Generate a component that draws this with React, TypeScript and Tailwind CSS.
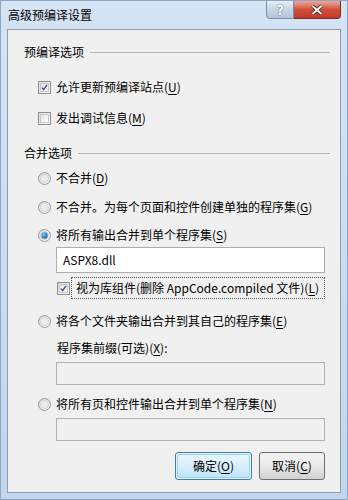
import React from 'react';

const font = { fontFamily: '"Noto Sans CJK SC", "Noto Sans", sans-serif' };

function Key({ k }: { k: string }) {
  return (
    <>
      (<span className="underline underline-offset-2">{k}</span>)
    </>
  );
}

function CheckBox({ checked }: { checked?: boolean }) {
  return (
    <span className="w-[13px] h-[13px] border border-[#8e8f8f] bg-gradient-to-br from-[#dcdcdc] to-[#fbfbfb] flex items-center justify-center shrink-0">
      <span className="w-[9px] h-[9px] border border-[#c8c8c8] bg-gradient-to-br from-[#e4e4e4] to-[#fdfdfd] flex items-center justify-center">
        {checked && (
          <svg width="9" height="9" viewBox="0 0 9 9">
            <path d="M1.2 4.6 L3.4 7.2 L7.8 1.2" fill="none" stroke="#3b4c8f" strokeWidth="1.8" />
          </svg>
        )}
      </span>
    </span>
  );
}

function Radio({ checked }: { checked?: boolean }) {
  return (
    <svg width="13" height="13" viewBox="0 0 13 13" className="shrink-0">
      <defs>
        <linearGradient id="rg" x1="0" y1="0" x2="1" y2="1">
          <stop offset="0" stopColor="#d8d8d8" />
          <stop offset="1" stopColor="#fafafa" />
        </linearGradient>
        <radialGradient id="rb" cx="0.4" cy="0.35" r="0.7">
          <stop offset="0" stopColor="#8fd0f5" />
          <stop offset="0.6" stopColor="#2a86c8" />
          <stop offset="1" stopColor="#1d5f9c" />
        </radialGradient>
      </defs>
      <circle cx="6.5" cy="6.5" r="6" fill="url(#rg)" stroke="#999" strokeWidth="1" />
      <circle cx="6.5" cy="6.5" r="4" fill="#ececec" stroke="#cfcfcf" strokeWidth="0.8" />
      {checked && <circle cx="6.5" cy="6.5" r="3.2" fill="url(#rb)" />}
    </svg>
  );
}

function Row({ children, className = '' }: { children: React.ReactNode; className?: string }) {
  return <div className={`h-[20px] flex items-center gap-[5px] ${className}`}>{children}</div>;
}

function Header({ text, className = '' }: { text: string; className?: string }) {
  return (
    <div className={`h-[20px] flex items-center pl-[16px] pr-[10px] gap-[6px] ${className}`}>
      <span>{text}</span>
      <div className="flex-1 h-px bg-[#b7b7b7]" />
    </div>
  );
}

export default function App() {
  return (
    <div
      className="w-[348px] h-[500px] flex flex-col bg-gradient-to-b from-[#d5e4f4] to-[#c2d6ec] border border-[#8ea6c2] text-[12px] text-black leading-none overflow-hidden"
      style={font}
    >
      {/* 标题栏 */}
      <div className="h-[28px] flex items-start justify-between">
        <div className="pl-[7px] pt-[8px] text-[12px]">高级预编译设置</div>
        <div className="flex mr-[6px] -mt-px">
          <div className="w-[28px] h-[19px] rounded-bl-[4px] border border-[#7c8ea6] bg-gradient-to-b from-[#e6eef7] via-[#c7d5e6] to-[#b4c6dc] flex items-center justify-center text-white font-bold text-[13px]" style={{ textShadow: '0 0 2px #3b4d66' }}>
            ?
          </div>
          <div className="w-[47px] h-[19px] rounded-br-[4px] border border-l-0 border-[#7a2d25] bg-gradient-to-b from-[#e9a99c] via-[#d0503c] to-[#c13a26] flex items-center justify-center">
            <svg width="12" height="10" viewBox="0 0 12 10">
              <path d="M1.5 1 L10.5 9 M10.5 1 L1.5 9" stroke="#3b1510" strokeWidth="3.4" />
              <path d="M1.5 1 L10.5 9 M10.5 1 L1.5 9" stroke="#fff" strokeWidth="2" />
            </svg>
          </div>
        </div>
      </div>

      {/* 内容面板 */}
      <div className="mx-[6px] h-[464px] bg-[#f0f0f0] border border-[#8d9cb0] flex flex-col">
        <Header text="预编译选项" className="mt-[12px]" />
        <Row className="mt-[15px] pl-[30px]">
          <CheckBox checked />
          <span>
            允许更新预编译站点<Key k="U" />
          </span>
        </Row>
        <Row className="mt-[11px] pl-[30px]">
          <CheckBox />
          <span>
            发出调试信息<Key k="M" />
          </span>
        </Row>

        <Header text="合并选项" className="mt-[15px]" />
        <Row className="mt-[5px] pl-[30px]">
          <Radio />
          <span>
            不合并<Key k="D" />
          </span>
        </Row>
        <Row className="mt-[9px] pl-[30px]">
          <Radio />
          <span>
            不合并。为每个页面和控件创建单独的程序集<Key k="G" />
          </span>
        </Row>
        <Row className="mt-[8px] pl-[30px]">
          <Radio checked />
          <span>
            将所有输出合并到单个程序集<Key k="S" />
          </span>
        </Row>
        <div className="mt-[2px] ml-[48px] mr-[15px] h-[26px] bg-white border border-[#abadb3] flex items-center px-[6px]">
          ASPX8.dll
        </div>
        <div className="mt-[4px] ml-[49px] mr-[15px] h-[22px] flex items-center gap-[1px]">
          <CheckBox checked />
          <span className="flex-1 h-full border border-dotted border-[#555] flex items-center pl-[4px]">
            视为库组件(删除 AppCode.compiled 文件)<Key k="L" />
          </span>
        </div>
        <Row className="mt-[12px] pl-[30px]">
          <Radio />
          <span>
            将各个文件夹输出合并到其自己的程序集<Key k="E" />
          </span>
        </Row>
        <Row className="mt-[7px] pl-[49px]">
          <span>
            程序集前缀(可选)<Key k="X" />:
          </span>
        </Row>
        <div className="mt-[4px] ml-[48px] mr-[15px] h-[23px] bg-[#f0f0f0] border border-[#adb2b5]" />
        <Row className="mt-[9px] pl-[30px]">
          <Radio />
          <span>
            将所有页和控件输出合并到单个程序集<Key k="N" />
          </span>
        </Row>
        <div className="mt-[4px] ml-[48px] mr-[15px] h-[23px] bg-[#f0f0f0] border border-[#adb2b5]" />

        <div className="mt-[11px] mr-[15px] flex justify-end gap-[7px]">
          <div className="w-[77px] h-[28px] rounded-[3px] border border-[#3c7fb1] p-px">
            <div className="w-full h-full rounded-[2px] border border-[#93d6f4] bg-gradient-to-b from-[#eaf6fd] via-[#d9eefa] to-[#bee6fd] flex items-center justify-center">
              <span>
                确定<Key k="O" />
              </span>
            </div>
          </div>
          <div className="w-[66px] h-[28px] rounded-[3px] border border-[#707070] bg-gradient-to-b from-[#f2f2f2] via-[#ebebeb] to-[#cfcfcf] flex items-center justify-center">
            <span>
              取消<Key k="C" />
            </span>
          </div>
        </div>
      </div>
    </div>
  );
}
